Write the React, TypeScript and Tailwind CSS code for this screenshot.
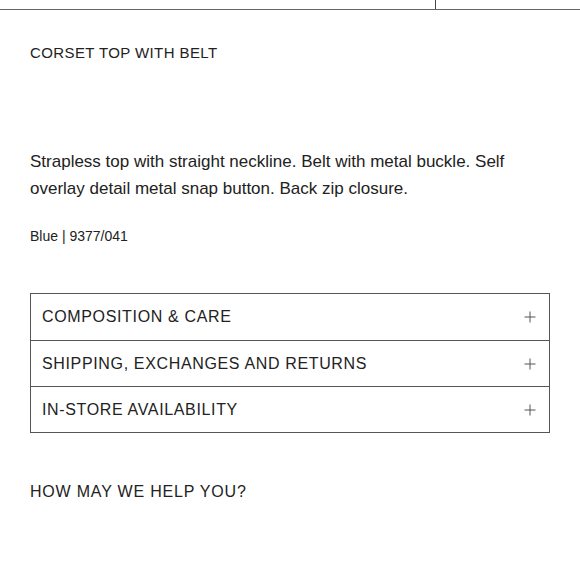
import React from 'react';

const sections = ['COMPOSITION & CARE', 'SHIPPING, EXCHANGES AND RETURNS', 'IN-STORE AVAILABILITY'];

const Plus: React.FC = () => (
  <svg width="12" height="12" viewBox="0 0 12 12" className="text-[#555]">
    <path d="M6 0.5v11M0.5 6h11" stroke="currentColor" strokeWidth="1" fill="none" />
  </svg>
);

const App: React.FC = () => {
  return (
    <div className="w-[580px] h-[580px] bg-white text-[#222] overflow-hidden" style={{ fontFamily: '"Liberation Sans", Arial, sans-serif' }}>
      <div className="flex h-[10px] border-b border-[#666]">
        <div className="w-[435px]" />
        <div className="border-l border-[#444]" />
      </div>

      <div className="px-[30px]">
        <h1 className="mt-[35px] text-[15px] leading-[16px] tracking-[0.4px]">CORSET TOP WITH BELT</h1>

        <p className="mt-[87px] text-[17px] leading-[27px] w-[520px]">
          Strapless top with straight neckline. Belt with metal buckle. Self overlay detail metal snap button. Back zip closure.
        </p>

        <p className="mt-[26px] text-[14px] leading-[16px]">Blue | 9377/041</p>

        <div className="mt-[49px] w-[520px] border border-[#555]">
          {sections.map((s, i) => (
            <div
              key={s}
              className={`flex items-center justify-between h-[46px] pl-[11px] pr-[13px] ${i > 0 ? 'border-t border-[#555]' : ''}`}
            >
              <span className="text-[16px] tracking-[0.65px]">{s}</span>
              <Plus />
            </div>
          ))}
        </div>

        <h2 className="mt-[50px] text-[16px] leading-[18px] tracking-[0.8px]">HOW MAY WE HELP YOU?</h2>
      </div>
    </div>
  );
};

export default App;
